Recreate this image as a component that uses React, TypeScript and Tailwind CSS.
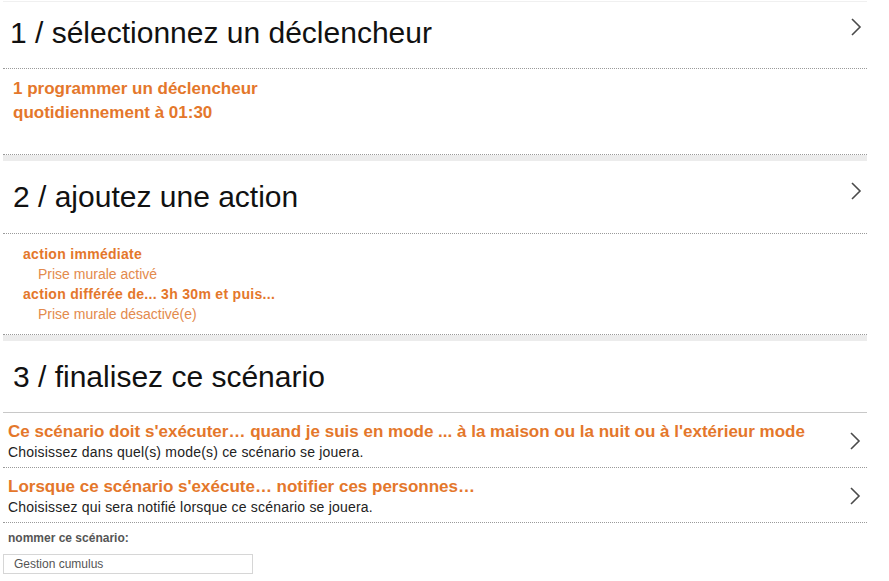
const orange = "text-[#e4772b]"

function Chevron({ className = "" }: { className?: string }) {
  return (
    <svg width="12" height="18" viewBox="0 0 12 18" className={className}>
      <path d="M2 1 L10 9 L2 17" fill="none" stroke="#4a4a4a" strokeWidth="1.6" />
    </svg>
  )
}

function Dotted() {
  return <div className="h-0 border-t border-dotted border-[#9a9a9a]" />
}

function Gap() {
  return <div className="h-[6px] bg-[#ececec]" />
}

function Option({ title, sub }: { title: string; sub: string }) {
  return (
    <div className="flex items-center justify-between pl-[5px] pr-[6px] h-[54px]">
      <div className="pt-[4px]">
        <div className={`text-[17px] font-bold leading-[20px] ${orange}`}>{title}</div>
        <div className="text-[14px] tracking-[0.2px] leading-[20px] text-[#222]">{sub}</div>
      </div>
      <Chevron className="mt-[2px]" />
    </div>
  )
}

export default function App() {
  return (
    <div
      className="w-[889px] h-[581px] overflow-hidden bg-white text-[#111]"
      style={{ fontFamily: '"Liberation Sans", Arial, sans-serif' }}
    >
      <div className="w-[864px] ml-[3px] border-t border-[#f0f0f0] mt-[1px]">
        {/* 1 */}
        <div className="flex items-center justify-between h-[66px] pl-[7px] pr-[5px]">
          <h1 className="text-[30px] leading-[34px] -mt-[4px]">1 / sélectionnez un déclencheur</h1>
          <Chevron className="-mt-[16px]" />
        </div>
        <Dotted />
        <div className={`pl-[10px] pt-[8px] h-[85px] text-[17px] font-bold leading-[24px] ${orange}`}>
          <div>1 programmer un déclencheur</div>
          <div>quotidiennement à 01:30</div>
        </div>
        <Dotted />
        <Gap />

        {/* 2 */}
        <div className="flex items-center justify-between h-[72px] pl-[10px] pr-[5px]">
          <h2 className="text-[30px] leading-[34px]">2 / ajoutez une action</h2>
          <Chevron className="-mt-[12px]" />
        </div>
        <Dotted />
        <div className={`pl-[20px] pt-[10px] h-[100px] text-[14px] leading-[20px] ${orange}`}>
          <div className="font-bold tracking-[0.3px]">action immédiate</div>
          <div className="pl-[15px] text-[#e38a4c]">Prise murale activé</div>
          <div className="font-bold tracking-[0.3px]">action différée de... 3h 30m et puis...</div>
          <div className="pl-[15px] text-[#e38a4c]">Prise murale désactivé(e)</div>
        </div>
        <Dotted />
        <Gap />

        {/* 3 */}
        <div className="flex items-center h-[71px] pl-[10px]">
          <h2 className="text-[30px] leading-[34px]">3 / finalisez ce scénario</h2>
        </div>
        <div className="h-0 border-t border-[#c8c8c8]" />
        <Option
          title="Ce scénario doit s'exécuter… quand je suis en mode ... à la maison ou la nuit ou à l'extérieur mode"
          sub="Choisissez dans quel(s) mode(s) ce scénario se jouera."
        />
        <Dotted />
        <Option
          title="Lorsque ce scénario s'exécute… notifier ces personnes…"
          sub="Choisissez qui sera notifié lorsque ce scénario se jouera."
        />
        <Dotted />
        <div className="pl-[5px] pt-[7px] text-[12px] font-bold text-[#555] leading-[16px]">nommer ce scénario:</div>
        <div className="mt-[8px] w-[250px] h-[20px] border border-[#d6d6d6] px-[10px] text-[12px] leading-[18px] text-[#555]">
          Gestion cumulus
        </div>
      </div>
    </div>
  )
}
